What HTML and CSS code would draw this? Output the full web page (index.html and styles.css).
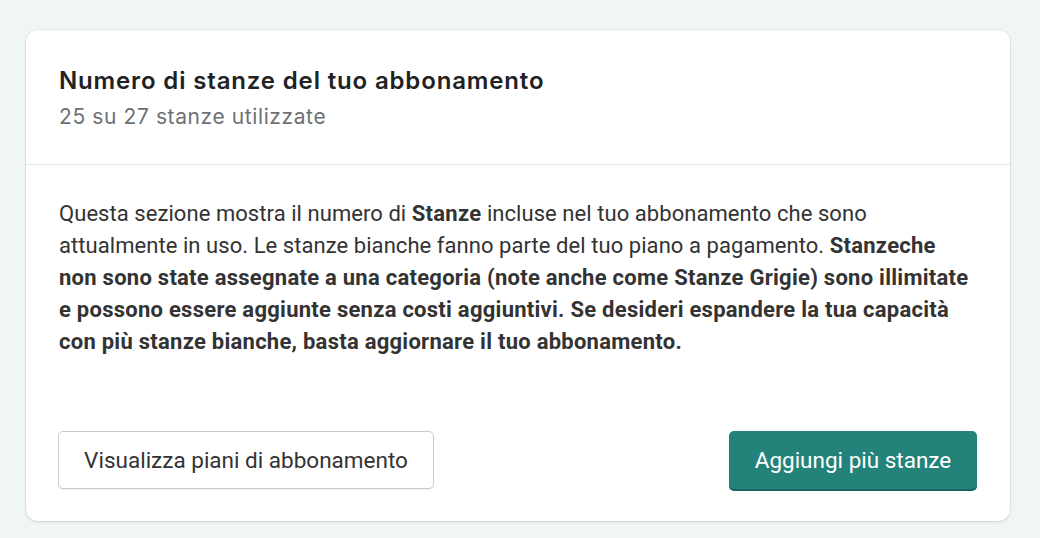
FILE: index.html
```html
<!DOCTYPE html>
<html lang="it">
<head>
<meta charset="utf-8">
<link rel="stylesheet" href="styles.css">
</head>
<body>
<div class="card">
  <div class="card-header">
    <h2 class="title">Numero di stanze del tuo abbonamento</h2>
    <p class="subtitle">25 su 27 stanze utilizzate</p>
  </div>
  <div class="card-body">
    <p class="desc">Questa sezione mostra il numero di <strong>Stanze</strong> incluse nel tuo abbonamento che sono<br>attualmente in uso. Le stanze bianche fanno parte del tuo piano a pagamento. <strong>Stanzeche<br>non sono state assegnate a una categoria (note anche come Stanze Grigie) sono illimitate<br>e possono essere aggiunte senza costi aggiuntivi. Se desideri espandere la tua capacità<br>con più stanze bianche, basta aggiornare il tuo abbonamento.</strong></p>
    <div class="actions">
      <button class="btn btn-secondary">Visualizza piani di abbonamento</button>
      <button class="btn btn-primary">Aggiungi più stanze</button>
    </div>
  </div>
</div>
</body>
</html>
```
FILE: styles.css
```css
* { box-sizing: border-box; }
html, body { margin: 0; height: 100%; }
body {
  background: #f0f5f5;
  font-family: Roboto, "Liberation Sans", sans-serif;
  padding: 30px 30px 0 26px;
  color: #333;
}
.card {
  background: #fff;
  border-radius: 12px;
  box-shadow: 0 1px 3px rgba(0,0,0,0.12), 0 0 0 1px rgba(0,0,0,0.03);
  width: 984px;
}
.card-header {
  padding: 37px 33px 0;
  height: 135px;
  border-bottom: 1px solid #e3e6e8;
  font-family: Inter, Roboto, sans-serif;
}
.title {
  margin: 0;
  font-size: 24px;
  font-weight: 600;
  line-height: 28px;
  letter-spacing: 0.85px;
  color: #202223;
}
.subtitle {
  margin: 8px 0 0;
  font-size: 21px;
  line-height: 28px;
  letter-spacing: 0.6px;
  color: #6d7175;
}
.card-body {
  padding: 33px 33px 32px;
}
.desc {
  margin: 0 -30px 0 0;
  font-size: 22px;
  line-height: 32px;
  color: #333;
  white-space: nowrap;
  letter-spacing: 0.06px;
}
.desc strong { font-weight: 700; letter-spacing: 0.26px; }
.actions {
  display: flex;
  justify-content: space-between;
  margin-top: 73px;
}
.btn {
  font-family: Roboto, "Liberation Sans", sans-serif;
  font-size: 22.5px;
  height: 58px;
  border-radius: 5px;
  cursor: pointer;
}
.btn-secondary {
  background: #fff;
  border: 1px solid #c9cccf;
  color: #333;
  width: 376px;
  margin-left: -1px;
  box-shadow: 0 1px 0 rgba(0,0,0,0.05);
}
.btn-primary {
  background: #23827a;
  border: none;
  color: #fff;
  width: 248px;
  box-shadow: 0 2px 0 #17645d;
}
```
